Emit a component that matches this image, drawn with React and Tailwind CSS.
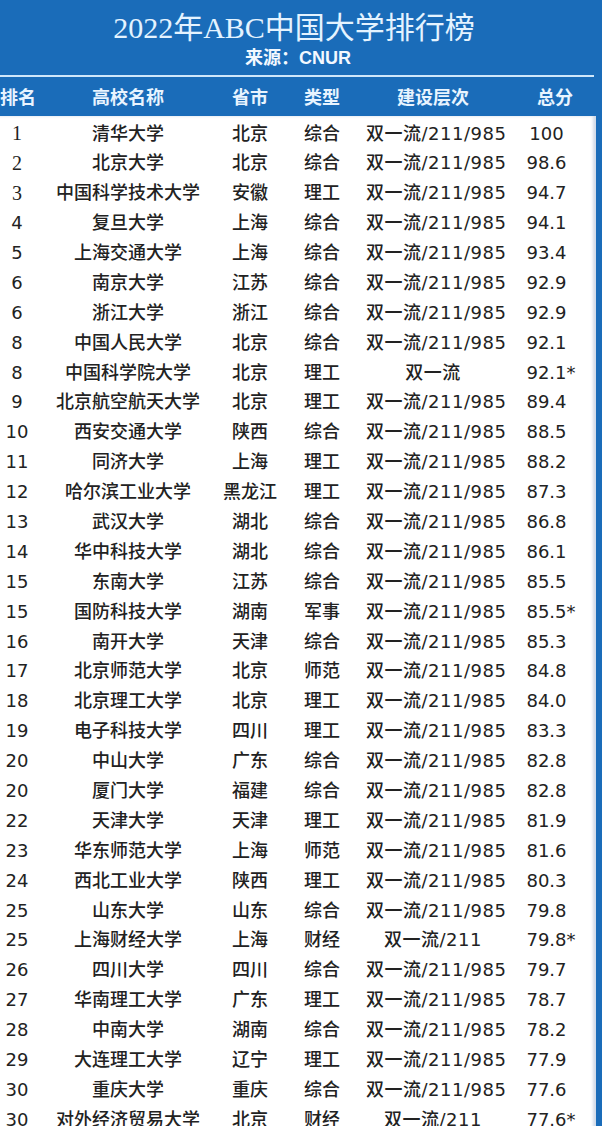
import React from 'react'

const rows = [
  ['1', '清华大学', '北京', '综合', '双一流/211/985', '100'],
  ['2', '北京大学', '北京', '综合', '双一流/211/985', '98.6'],
  ['3', '中国科学技术大学', '安徽', '理工', '双一流/211/985', '94.7'],
  ['4', '复旦大学', '上海', '综合', '双一流/211/985', '94.1'],
  ['5', '上海交通大学', '上海', '综合', '双一流/211/985', '93.4'],
  ['6', '南京大学', '江苏', '综合', '双一流/211/985', '92.9'],
  ['6', '浙江大学', '浙江', '综合', '双一流/211/985', '92.9'],
  ['8', '中国人民大学', '北京', '综合', '双一流/211/985', '92.1'],
  ['8', '中国科学院大学', '北京', '理工', '双一流', '92.1*'],
  ['9', '北京航空航天大学', '北京', '理工', '双一流/211/985', '89.4'],
  ['10', '西安交通大学', '陕西', '综合', '双一流/211/985', '88.5'],
  ['11', '同济大学', '上海', '理工', '双一流/211/985', '88.2'],
  ['12', '哈尔滨工业大学', '黑龙江', '理工', '双一流/211/985', '87.3'],
  ['13', '武汉大学', '湖北', '综合', '双一流/211/985', '86.8'],
  ['14', '华中科技大学', '湖北', '综合', '双一流/211/985', '86.1'],
  ['15', '东南大学', '江苏', '综合', '双一流/211/985', '85.5'],
  ['15', '国防科技大学', '湖南', '军事', '双一流/211/985', '85.5*'],
  ['16', '南开大学', '天津', '综合', '双一流/211/985', '85.3'],
  ['17', '北京师范大学', '北京', '师范', '双一流/211/985', '84.8'],
  ['18', '北京理工大学', '北京', '理工', '双一流/211/985', '84.0'],
  ['19', '电子科技大学', '四川', '理工', '双一流/211/985', '83.3'],
  ['20', '中山大学', '广东', '综合', '双一流/211/985', '82.8'],
  ['20', '厦门大学', '福建', '综合', '双一流/211/985', '82.8'],
  ['22', '天津大学', '天津', '理工', '双一流/211/985', '81.9'],
  ['23', '华东师范大学', '上海', '师范', '双一流/211/985', '81.6'],
  ['24', '西北工业大学', '陕西', '理工', '双一流/211/985', '80.3'],
  ['25', '山东大学', '山东', '综合', '双一流/211/985', '79.8'],
  ['25', '上海财经大学', '上海', '财经', '双一流/211', '79.8*'],
  ['26', '四川大学', '四川', '综合', '双一流/211/985', '79.7'],
  ['27', '华南理工大学', '广东', '理工', '双一流/211/985', '78.7'],
  ['28', '中南大学', '湖南', '综合', '双一流/211/985', '78.2'],
  ['29', '大连理工大学', '辽宁', '理工', '双一流/211/985', '77.9'],
  ['30', '重庆大学', '重庆', '综合', '双一流/211/985', '77.6'],
  ['30', '对外经济贸易大学', '北京', '财经', '双一流/211', '77.6*'],
]

const cols = 'grid grid-cols-[34px_188px_56px_88px_134px_96px]'

function Score({ value }) {
  const star = value.endsWith('*')
  const num = star ? value.slice(0, -1) : value
  return (
    <span>
      {num}
      <span className={star ? '' : 'invisible'}>*</span>
    </span>
  )
}

export default function App() {
  return (
    <div
      className="w-[602px] h-[1126px] overflow-hidden bg-white"
      style={{ fontFamily: '"DejaVu Sans", "Noto Sans CJK SC", sans-serif' }}
    >
      <header
        className="bg-[#1a6cb9] h-[116px] flex flex-col"
        style={{ fontFamily: '"Liberation Sans", "Noto Sans CJK SC", sans-serif' }}
      >
        <h1
          className="pt-[9px] pr-[14px] h-[46px] text-center text-[30px] leading-[37px] text-[#e4f3ff]"
          style={{ fontFamily: '"Liberation Serif", "Noto Sans CJK SC", serif' }}
        >
          2022年ABC中国大学排行榜
        </h1>
        <p className="pt-[1px] pr-[6px] text-center text-[18px] leading-[22px] font-bold text-[#f2f8ff]">
          来源：CNUR
        </p>
        <div className="mt-[6px] h-[2px] w-[594px] bg-[#cfe7fb]"></div>
        <div className={`${cols} h-[39px] pt-[3px] items-center text-[18px] font-bold text-[#e8f4ff]`}>
          <span className="text-center whitespace-nowrap">排名</span>
          <span className="text-center">高校名称</span>
          <span className="text-center">省市</span>
          <span className="text-center">类型</span>
          <span className="text-center">建设层次</span>
          <span className="text-center pl-[14px]">总分</span>
        </div>
      </header>

      <div className="flex">
        <div className="w-[596px] pt-[2px] shadow-[inset_-3px_0_3px_rgba(120,150,190,0.35)]">
          {rows.map((r, i) => (
            <div key={i} className={`${cols} h-[29.9px] items-center text-[18px] font-medium text-[#222]`}>
              <span
                className="text-center"
                style={i < 3 ? { fontFamily: '"Liberation Serif", serif', fontSize: '20px' } : undefined}
              >
                {r[0]}
              </span>
              <span className="text-center whitespace-nowrap">{r[1]}</span>
              <span className="text-center whitespace-nowrap">{r[2]}</span>
              <span className="text-center">{r[3]}</span>
              <span className="text-center whitespace-nowrap tracking-[0.5px]">{r[4]}</span>
              <span className="text-center pl-[6px]">
                <Score value={r[5]} />
              </span>
            </div>
          ))}
        </div>
        <div className="w-[6px] bg-[#1a6cb9]"></div>
      </div>
    </div>
  )
}
